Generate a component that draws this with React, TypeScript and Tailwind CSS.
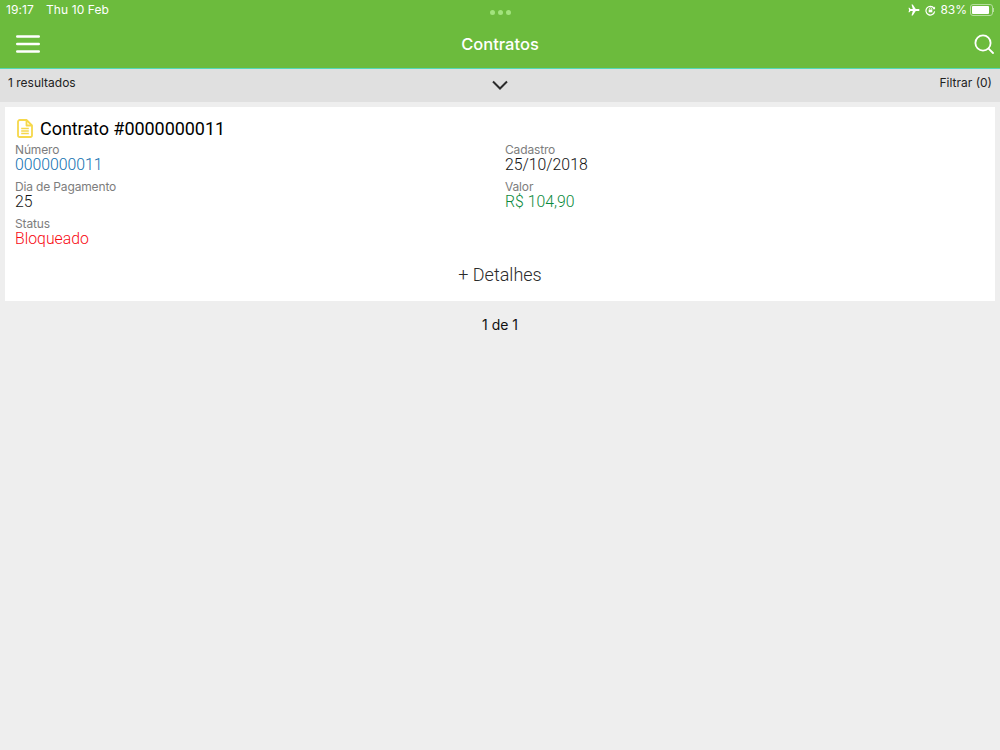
const font = "font-['Inter','Liberation_Sans',sans-serif]";

const Field = ({ label, value, color }: { label: string; value: string; color: string }) => (
  <div className="h-[37px]">
    <div className="text-[12px] leading-[15px] tracking-[-0.15px] text-[#7d7d7d]">{label}</div>
    <div className={`text-[15.8px] leading-[16px] font-light font-['Roboto',sans-serif] ${color}`}>{value}</div>
  </div>
);

const App = () => {
  return (
    <div className={`w-[1000px] h-[750px] bg-[#eeeeee] overflow-hidden ${font}`}>
      <div className="bg-[#6cbb3d] h-[69px] border-b border-[#55d8b8]">
        <div className="h-5 relative flex justify-between items-center pl-[6px] pr-[6px] text-white text-[12px]">
          <div className="flex gap-[12px] tracking-[0.1px]">
            <span>19:17</span>
            <span>Thu 10 Feb</span>
          </div>
          <div className="absolute left-[490px] top-[10px] flex gap-[3px]">
            <span className="w-[5px] h-[5px] rounded-full bg-[#a2e37d]" />
            <span className="w-[5px] h-[5px] rounded-full bg-[#a2e37d]" />
            <span className="w-[5px] h-[5px] rounded-full bg-[#a2e37d]" />
          </div>
          <div className="flex items-center gap-[3px]">
            <svg width="12" height="12" viewBox="0 0 24 24" fill="white">
              <path d="M23 12c0-1.200-1-2-2.200-2H15.500L9.500 1H7l2.600 9H5L3 7.500H1L2.200 12 1 16.500h2L5 14h4.600L7 23h2.500l6-9h5.300c1.200 0 2.200-.8 2.200-2z" />
            </svg>
            <svg width="11" height="11" viewBox="0 0 24 24" fill="none" stroke="white" strokeWidth="2.600" className="ml-[2px]">
              <path d="M21 14a9.500 9.500 0 1 1-1.500-7" />
              <path d="M22 3v6h-6" fill="white" stroke="none" />
              <rect x="8" y="10" width="8" height="6" fill="white" stroke="none" />
              <path d="M9.500 10V8.500a2.500 2.500 0 0 1 5 0V10" strokeWidth="1.600" />
            </svg>
            <span className="ml-[1px]">83%</span>
            <div className="flex items-center">
              <div className="w-[23px] h-[12px] rounded-[3px] border border-[#b5dd9e] p-[1px]">
                <div className="w-[17px] h-full bg-white rounded-[1px]" />
              </div>
              <div className="w-[1px] h-[4px] bg-[#b5dd9e]" />
            </div>
          </div>
        </div>
        <div className="h-[48px] flex items-center justify-between pl-[16px] pr-[6px] relative">
          <svg width="24" height="18" viewBox="0 0 24 18" stroke="white" strokeWidth="2.400" strokeLinecap="round">
            <path d="M1.200 1.500h21.600M1.200 9h21.600M1.200 16.500h21.600" />
          </svg>
          <div className="absolute inset-x-0 text-center text-white text-[16.500px] font-medium pointer-events-none">Contratos</div>
          <svg width="20" height="20" viewBox="0 0 20 20" fill="none" stroke="white" strokeWidth="1.800" strokeLinecap="round">
            <circle cx="9" cy="9" r="7.600" />
            <path d="M14.600 14.600L19 19" />
          </svg>
        </div>
      </div>

      <div className="h-[33px] bg-[#e0e0e0] flex items-center justify-between pl-[8px] pr-[8px] pb-[6px] text-[12px] text-[#222] relative">
        <span>1 resultados</span>
        <svg width="16" height="10" viewBox="0 0 16 10" fill="none" stroke="#2b2b2b" strokeWidth="2" className="absolute left-[492px] top-[11px]">
          <path d="M1 1.500l7 7 7-7" />
        </svg>
        <span>Filtrar (0)</span>
      </div>

      <div className="mx-[5px] mt-[5px] h-[194px] bg-white">
        <div className="flex items-center pl-[12px] pt-[10px] h-[32px]">
          <svg width="16" height="19" viewBox="0 0 16 19" fill="none" stroke="#f6d84b" strokeWidth="1.800" strokeLinejoin="round">
            <path d="M2.800 1h6.700L15 6.500v9.700a1.800 1.800 0 0 1-1.800 1.800H2.800A1.800 1.800 0 0 1 1 16.200V2.800A1.800 1.800 0 0 1 2.800 1z" />
            <path d="M9.500 1v5.500H15" />
            <path d="M4.200 9.500h7.600M4.200 12h7.600M4.200 14.500h7.600" strokeWidth="1.300" />
          </svg>
          <span className="ml-[7px] text-[18px] tracking-[-0.05px] text-black font-['Roboto',sans-serif]">Contrato #0000000011</span>
        </div>
        <div className="grid grid-cols-2 pl-[10px] pt-[3px]">
          <Field label="Número" value="0000000011" color="text-[#0f70b0]" />
          <Field label="Cadastro" value="25/10/2018" color="text-[#111111]" />
          <Field label="Dia de Pagamento" value="25" color="text-[#111111]" />
          <Field label="Valor" value="R$ 104,90" color="text-[#0a8a3c]" />
          <Field label="Status" value="Bloqueado" color="text-[#f80a12]" />
        </div>
        <div className="text-center text-[18px] leading-[24px] text-[#2b2b2b] mt-[10px] font-['Roboto',sans-serif] font-light">+ Detalhes</div>
      </div>

      <div className="text-center text-[14px] text-[#111] mt-[14px] leading-[20px]">1 de 1</div>
    </div>
  );
};

export default App;
